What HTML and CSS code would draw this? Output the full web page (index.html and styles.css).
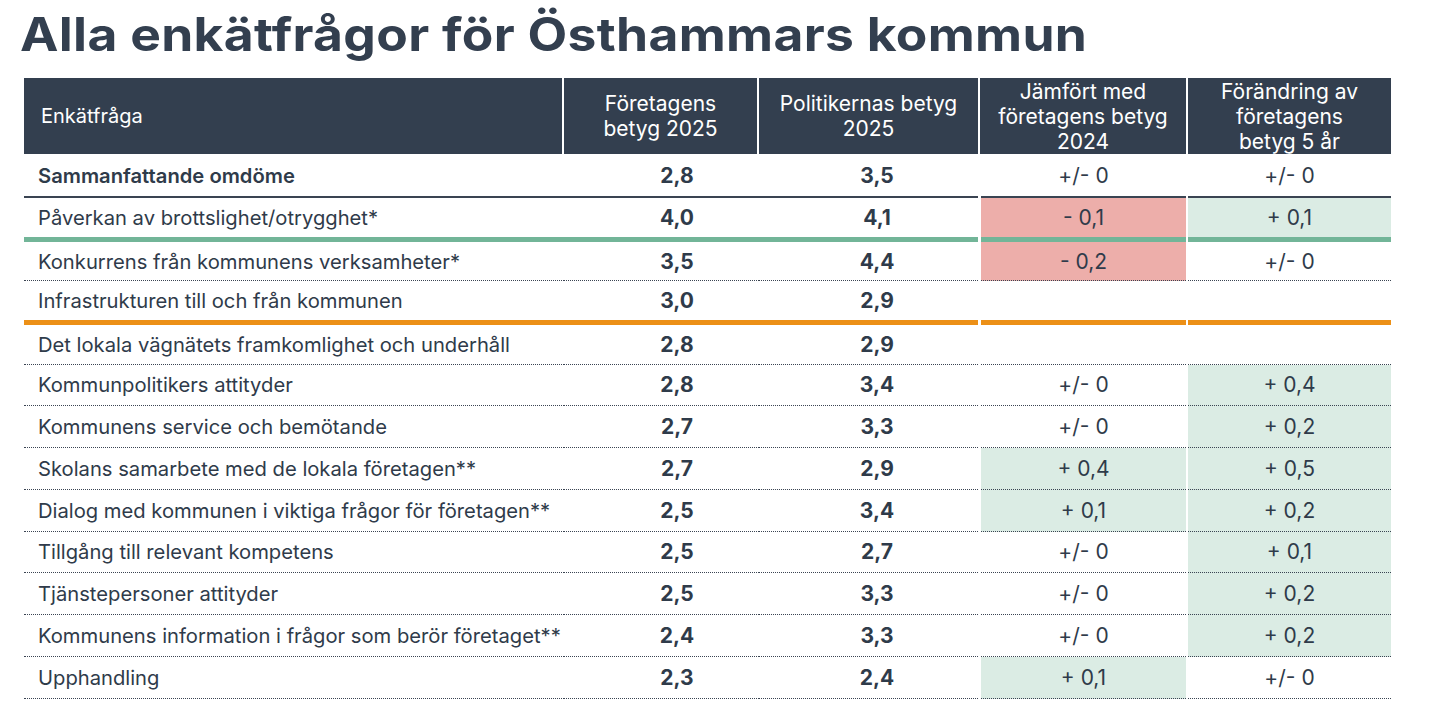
FILE: index.html
```html
<!DOCTYPE html>
<html lang="sv">
<head>
<meta charset="utf-8">
<title>Alla enkätfrågor för Östhammars kommun</title>
<link rel="stylesheet" href="styles.css">
</head>
<body>
<div class="title-wrap"><h1 class="title">Alla enkätfrågor för Östhammars kommun</h1></div>
<div class="table">
  <div class="head">
    <div class="h h1">Enkätfråga</div>
    <div class="h">Företagens<br>betyg 2025</div>
    <div class="h">Politikernas betyg<br>2025</div>
    <div class="h">Jämfört med<br>företagens betyg<br>2024</div>
    <div class="h">Förändring av<br>företagens<br>betyg 5 år</div>
  </div>

  <div class="row r1 line-dark">
    <div class="c q strong">Sammanfattande omdöme</div>
    <div class="c v2">2,8</div>
    <div class="c v3">3,5</div>
    <div class="c d4">+/- 0</div>
    <div class="c d5">+/- 0</div>
  </div>
  <div class="row r2 line-green">
    <div class="c q">Påverkan av brottslighet/otrygghet*</div>
    <div class="c v2">4,0</div>
    <div class="c v3">4,1</div>
    <div class="c d4 red">- 0,1</div>
    <div class="c d5 green">+ 0,1</div>
  </div>
  <div class="row r3 line-dot">
    <div class="c q">Konkurrens från kommunens verksamheter*</div>
    <div class="c v2">3,5</div>
    <div class="c v3">4,4</div>
    <div class="c d4 red">- 0,2</div>
    <div class="c d5">+/- 0</div>
  </div>
  <div class="row r4 line-orange">
    <div class="c q">Infrastrukturen till och från kommunen</div>
    <div class="c v2">3,0</div>
    <div class="c v3">2,9</div>
    <div class="c d4"></div>
    <div class="c d5"></div>
  </div>
  <div class="row r5 line-dot">
    <div class="c q">Det lokala vägnätets framkomlighet och underhåll</div>
    <div class="c v2">2,8</div>
    <div class="c v3">2,9</div>
    <div class="c d4"></div>
    <div class="c d5"></div>
  </div>
  <div class="row rn line-dot">
    <div class="c q">Kommunpolitikers attityder</div>
    <div class="c v2">2,8</div>
    <div class="c v3">3,4</div>
    <div class="c d4">+/- 0</div>
    <div class="c d5 green">+ 0,4</div>
  </div>
  <div class="row rn line-dot">
    <div class="c q">Kommunens service och bemötande</div>
    <div class="c v2">2,7</div>
    <div class="c v3">3,3</div>
    <div class="c d4">+/- 0</div>
    <div class="c d5 green">+ 0,2</div>
  </div>
  <div class="row rn line-dot">
    <div class="c q">Skolans samarbete med de lokala företagen**</div>
    <div class="c v2">2,7</div>
    <div class="c v3">2,9</div>
    <div class="c d4 green">+ 0,4</div>
    <div class="c d5 green">+ 0,5</div>
  </div>
  <div class="row rn line-dot">
    <div class="c q">Dialog med kommunen i viktiga frågor för företagen**</div>
    <div class="c v2">2,5</div>
    <div class="c v3">3,4</div>
    <div class="c d4 green">+ 0,1</div>
    <div class="c d5 green">+ 0,2</div>
  </div>
  <div class="row rn line-dot">
    <div class="c q">Tillgång till relevant kompetens</div>
    <div class="c v2">2,5</div>
    <div class="c v3">2,7</div>
    <div class="c d4">+/- 0</div>
    <div class="c d5 green">+ 0,1</div>
  </div>
  <div class="row rn line-dot">
    <div class="c q">Tjänstepersoner attityder</div>
    <div class="c v2">2,5</div>
    <div class="c v3">3,3</div>
    <div class="c d4">+/- 0</div>
    <div class="c d5 green">+ 0,2</div>
  </div>
  <div class="row rn line-dot">
    <div class="c q">Kommunens information i frågor som berör företaget**</div>
    <div class="c v2">2,4</div>
    <div class="c v3">3,3</div>
    <div class="c d4">+/- 0</div>
    <div class="c d5 green">+ 0,2</div>
  </div>
  <div class="row rn line-dot">
    <div class="c q">Upphandling</div>
    <div class="c v2">2,3</div>
    <div class="c v3">2,4</div>
    <div class="c d4 green">+ 0,1</div>
    <div class="c d5">+/- 0</div>
  </div>
</div>
</body>
</html>
```
FILE: styles.css
```css
* { box-sizing: border-box; }
html, body { margin: 0; padding: 0; background: #ffffff; }
body {
  font-family: Inter, "Noto Sans", "Liberation Sans", sans-serif;
  color: #2f3b4a;
  width: 1437px;
}
.title-wrap {
  height: 78px;
  padding: 3px 0 0 20px;
}
.title {
  display: inline-block;
  margin: 0;
  font-size: 46px;
  font-weight: 700;
  letter-spacing: 0.3px;
  line-height: 62px;
  color: #333f4f;
  transform: scaleX(1.12);
  transform-origin: left center;
}
.table {
  margin-left: 24px;
  width: 1367px;
}
.head {
  display: grid;
  grid-template-columns: 538px 193px 219px 206px 203px;
  column-gap: 2px;
  height: 76px;
}
.h {
  background: #333f4f;
  color: #ffffff;
  font-size: 21px;
  line-height: 25px;
  text-align: center;
  display: flex;
  align-items: center;
  justify-content: center;
}
.h1 {
  justify-content: flex-start;
  padding-left: 17px;
  font-size: 20px;
}
.row {
  display: grid;
  grid-template-columns: 540px 195px 219px 208px 205px;
  font-size: 21px;
}
.c {
  display: flex;
  align-items: center;
  justify-content: center;
}
.q { justify-content: flex-start; padding-left: 14px; font-size: 20.2px; }
.strong { font-weight: 600; }
.v2 { font-weight: 700; padding-left: 31px; }
.v3 { font-weight: 700; padding-left: 17px; }
.d4 { margin-left: 3px; }
.d5 { margin-left: 2px; }
.red { background: #edaeaa; }
.green { background: #dbece4; }

.r1 { height: 44px; }
.r2 { height: 44px; }
.r3 { height: 39px; }
.r4 { height: 44px; }
.r5 { height: 39.5px; }
.rn { height: 41.75px; }

.line-dark .c { border-bottom: 2px solid #3a4452; }
.line-green .c { border-bottom: 5px solid #72b598; }
.line-orange .c { border-bottom: 5px solid #ec9017; }
.line-dot .c { border-bottom: 1px dotted #3a4452; }
```
